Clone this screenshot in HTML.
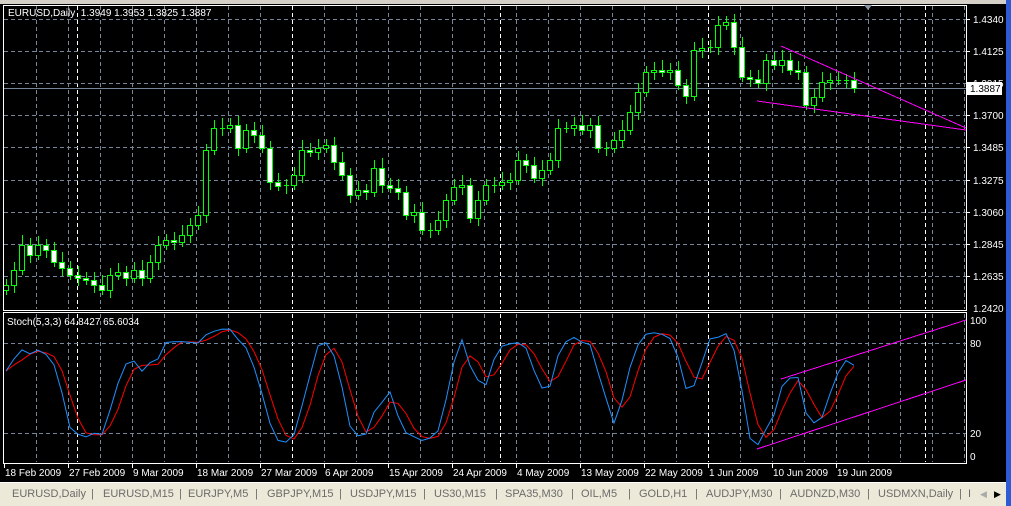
<!DOCTYPE html>
<html><head><meta charset="utf-8"><style>
html,body{margin:0;padding:0;width:1011px;height:506px;overflow:hidden;background:#000;font-family:"Liberation Sans",sans-serif}
#tabs{position:absolute;left:0;top:482px;width:1006px;height:24px;background:#ece9d8;border-top:1px solid #fff;box-sizing:border-box}
#tabs span{position:absolute;top:5px;font-size:11px;color:#6b6b6b;white-space:nowrap}
</style></head><body>
<svg id="s" width="1011" height="506" style="position:absolute;left:0;top:0" xmlns="http://www.w3.org/2000/svg" font-family="Liberation Sans, sans-serif" font-size="10"></svg>
<div id="tabs">
<span style="left:12px">EURUSD,Daily</span><span style="left:91px">|</span>
<span style="left:103px">EURUSD,M15</span><span style="left:179px">|</span>
<span style="left:188px">EURJPY,M5</span><span style="left:255px">|</span>
<span style="left:267px">GBPJPY,M15</span><span style="left:339px">|</span>
<span style="left:350px">USDJPY,M15</span><span style="left:423px">|</span>
<span style="left:434px">US30,M15</span><span style="left:495px">|</span>
<span style="left:505px">SPA35,M30</span><span style="left:571px">|</span>
<span style="left:581px">OIL,M5</span><span style="left:628px">|</span>
<span style="left:639px">GOLD,H1</span><span style="left:695px">|</span>
<span style="left:706px">AUDJPY,M30</span><span style="left:779px">|</span>
<span style="left:790px">AUDNZD,M30</span><span style="left:867px">|</span>
<span style="left:878px">USDMXN,Daily</span><span style="left:959px">|</span>
<span style="left:968px">I</span><span style="left:980px;color:#aaa;font-size:9px;top:6px">◀</span><span style="left:994px;color:#000;font-size:9px;top:6px">▶</span>
</div>
<div style="position:absolute;left:1006px;top:0;width:5px;height:506px;background:#2d5bd6"></div>
<div style="position:absolute;left:0;top:0;width:1006px;height:4px;background:#d4d0c8"></div>
<script>
var s=document.getElementById('s');var h='';
function L(x1,y1,x2,y2,c,d,w){h+='<line x1="'+x1+'" y1="'+y1+'" x2="'+x2+'" y2="'+y2+'" stroke="'+c+'" stroke-width="'+(w||1)+'"'+(d?' stroke-dasharray="4,3"':'')+' shape-rendering="crispEdges"/>';}
function T(x,y,t,c){h+='<text x="'+x+'" y="'+y+'" fill="'+(c||'#fff')+'">'+t+'</text>';}
for(var x=36;x<966;x+=32)L(x+.5,6,x+.5,309,'#76869a',1);
for(var x=36;x<966;x+=32)L(x+.5,314,x+.5,462,'#76869a',1);
[77,292,500,708,925].forEach(function(x){L(x+.5,6,x+.5,309,'#fff',1);L(x+.5,314,x+.5,462,'#fff',1);});
var py=[19,51,83,115,147,180,212,244,276],pl=['1.4340','1.4125','1.3915','1.3700','1.3485','1.3275','1.3060','1.2845','1.2635'];
py.forEach(function(y,i){L(4,y+.5,966,y+.5,'#76869a',1);L(966,y+.5,970,y+.5,'#fff');T(973,y+4,pl[i]);});
T(973,312,'1.2420');
h=h.replace(/stroke-width="1"/g,'stroke-width="1" stroke-dasharray="4,3"');
L(4,88.5,966,88.5,'#76869a');
var c=[285,270,245,255,245,250,262,268,275,278,280,285,290,275,272,278,270,278,262,245,240,242,235,225,215,150,128,128,125,148,130,135,148,182,186,185,175,150,152,148,145,162,175,195,190,192,168,185,188,192,215,212,230,230,220,200,187,185,218,200,185,185,182,180,160,165,178,170,160,128,128,125,130,125,148,148,140,130,112,92,72,70,72,70,85,96,50,48,47,25,22,47,77,79,83,60,65,60,70,72,105,97,82,80,80,80,88];
var hi=[],lo=[];
for(var i=0;i<c.length;i++){var x=6+i*8,o=i?c[i-1]:c[0]+5,cl=c[i];
var t=Math.min(o,cl),b=Math.max(o,cl);var H=t-6-(i*7%5),Lw=b+5+(i*3%6);hi.push(H);lo.push(Lw);
L(x+.5,H,x+.5,Lw,'#0f0');
if(b-t<2){L(x-2,cl+.5,x+3,cl+.5,'#0f0');}else
h+='<rect x="'+(x-2.5)+'" y="'+(t+.5)+'" width="5" height="'+(b-t)+'" fill="'+(cl>o?'#fff':'#000')+'" stroke="#0f0"/>';}
L(781,46,966,128,'#f0f');L(757,101,966,130,'#f0f');
h+='<rect x="3.5" y="5.5" width="963" height="305" fill="none" stroke="#fff"/>';
h+='<rect x="3.5" y="312.5" width="963" height="151" fill="none" stroke="#fff"/>';
h+='<rect x="966" y="82" width="36" height="13" fill="#fff"/>';T(970,92,'1.3887','#000');
h+='<polygon points="864,5 872,5 868,10" fill="#8a96a6"/>';
T(8,16,'EURUSD,Daily&#160; 1.3949 1.3953 1.3825 1.3887');
[[343,'80'],[433,'20']].forEach(function(a){h+='<line x1="4" y1="'+(a[0]+.5)+'" x2="966" y2="'+(a[0]+.5)+'" stroke="#76869a" stroke-dasharray="4,3"/>';T(970,a[0]+4,a[1]);});
T(970,324,'100');T(970,460,'0');
T(7,325,'Stoch(5,3,3) 64.8427 65.6034');
var K=[],Kr=[];for(var i=0;i<c.length;i++){var a=Math.max(0,i-4),mh=1e9,ml=-1e9;for(var j=a;j<=i;j++){mh=Math.min(mh,hi[j]);ml=Math.max(ml,lo[j]);}Kr.push([ml-c[i],ml-mh]);}
for(var i=0;i<c.length;i++){var n=0,d=0;for(var j=Math.max(0,i-2);j<=i;j++){n+=Kr[j][0];d+=Kr[j][1];}K.push(100*n/d);}
var D=K.map(function(v,i){var s=0,k=0;for(var j=Math.max(0,i-2);j<=i;j++){s+=K[j];k++;}return s/k;});
function P(a,col){var p='';a.forEach(function(v,i){p+=(i?'L':'M')+(6+i*8)+' '+(456-v*1.36).toFixed(1);});h+='<path d="'+p+'" fill="none" stroke="'+col+'"/>';}
P(D,'#f00');P(K,'#1e90ff');
L(757,449,966,380,'#f0f');L(781,379,966,320,'#f0f');
var tl=['18 Feb 2009','27 Feb 2009','9 Mar 2009','18 Mar 2009','27 Mar 2009','6 Apr 2009','15 Apr 2009','24 Apr 2009','4 May 2009','13 May 2009','22 May 2009','1 Jun 2009','10 Jun 2009','19 Jun 2009'];
tl.forEach(function(t,i){var x=4+i*64;L(x+.5,463,x+.5,468,'#fff');T(x+1,476,t);});
s.innerHTML=h;
</script>
</body></html>
